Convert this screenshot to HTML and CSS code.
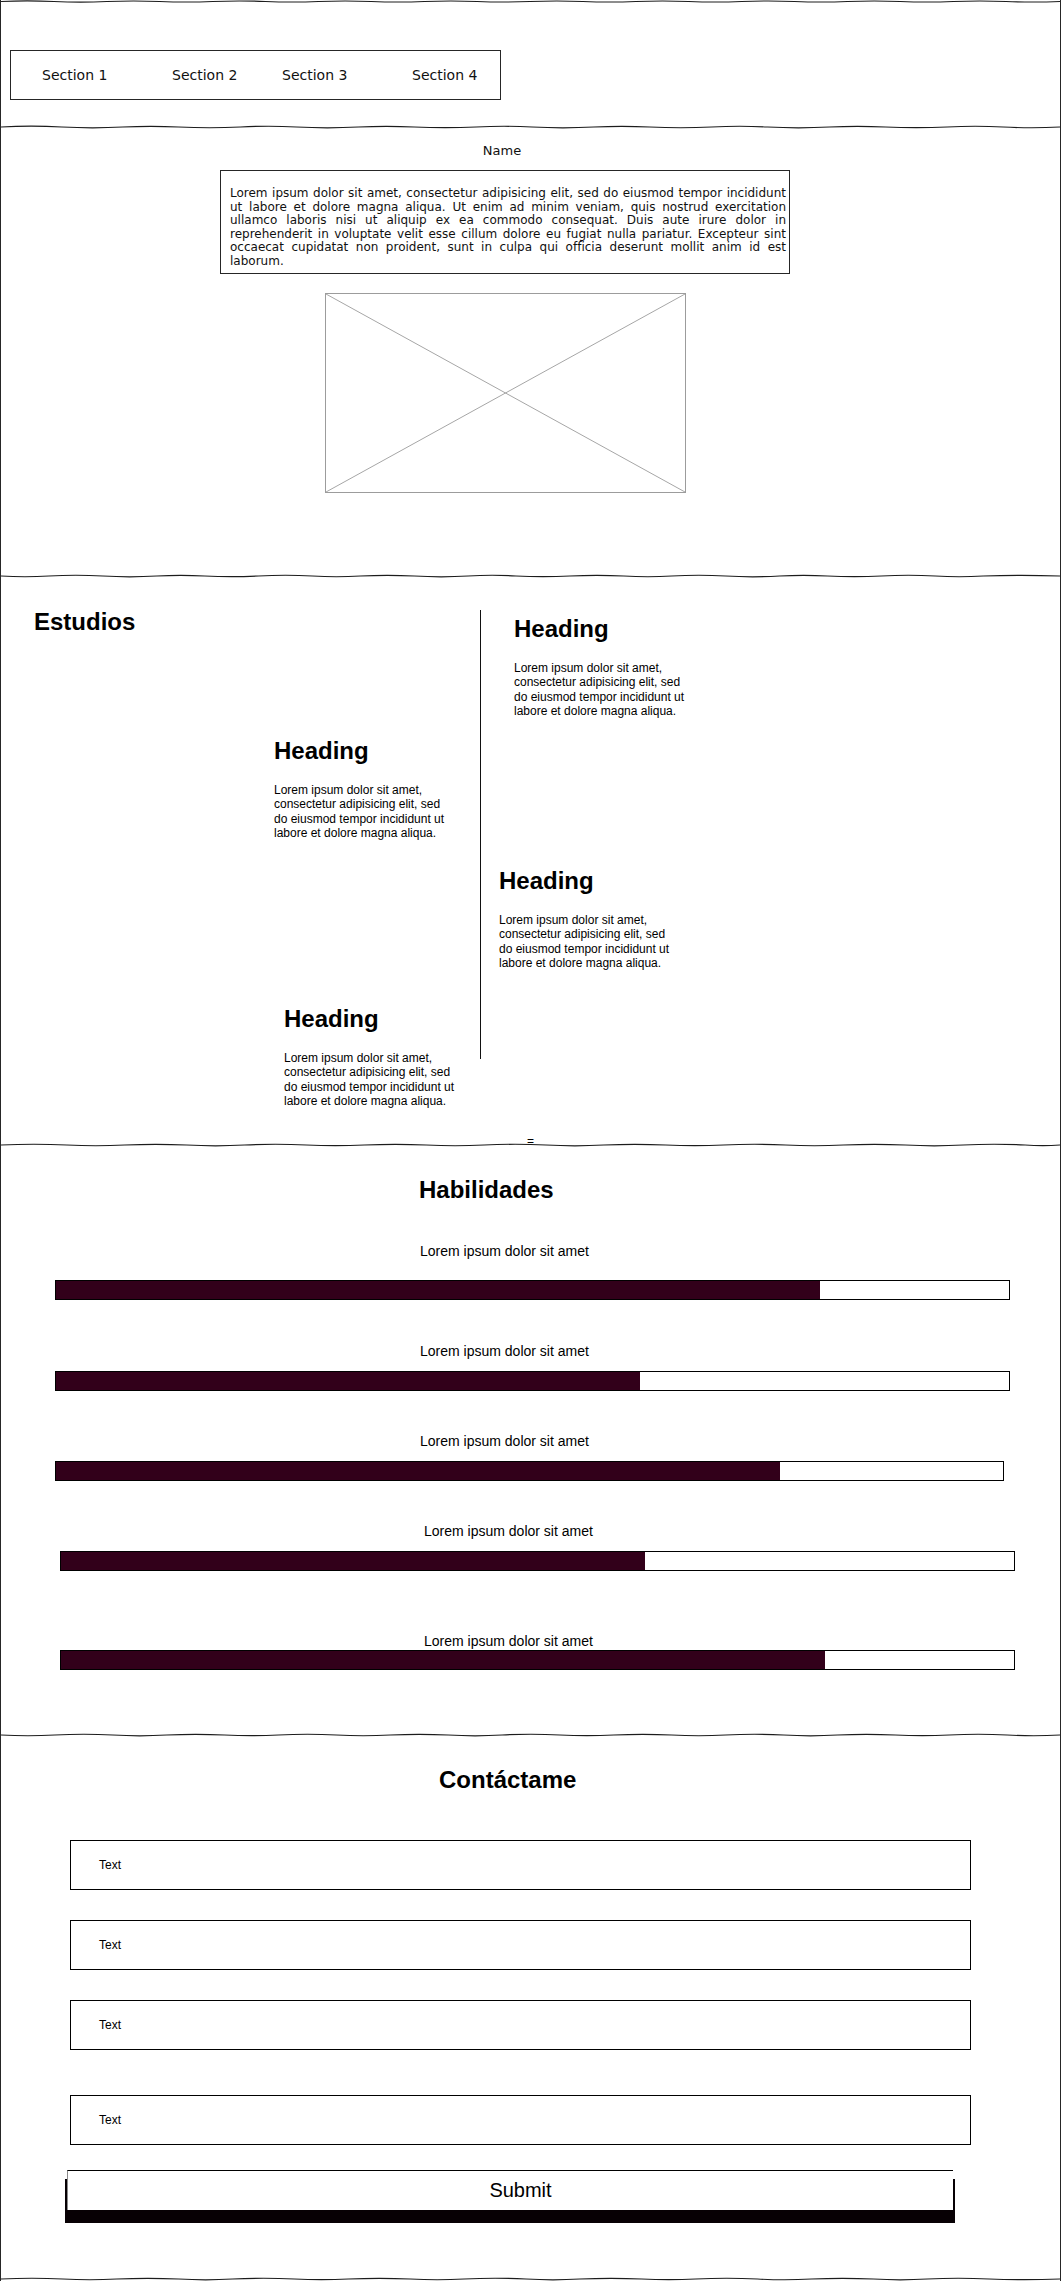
FILE: index.html
```html
<!DOCTYPE html>
<html lang="es">
<head>
<meta charset="utf-8">
<title>Portfolio wireframe</title>
<link rel="stylesheet" href="styles.css">
</head>
<body>
<div class="page">
  <svg class="rule rule--top" viewBox="0 0 1061 4" preserveAspectRatio="none"><path d="M0 2 Q26 0.6 53 2 Q80 3.4 106 2 Q133 0.6 159 2 Q186 3.4 212 2 Q239 0.6 265 2 Q292 3.4 318 2 Q345 0.6 371 2 Q398 3.4 424 2 Q451 0.6 477 2 Q504 3.4 530 2 Q557 0.6 583 2 Q610 3.4 636 2 Q663 0.6 689 2 Q716 3.4 742 2 Q769 0.6 795 2 Q822 3.4 848 2 Q875 0.6 901 2 Q928 3.4 954 2 Q981 0.6 1007 2 Q1034 3.4 1061 2"/></svg>

  <header class="top">
    <nav class="nav">
      <span class="nav-item">Section 1</span>
      <span class="nav-item">Section 2</span>
      <span class="nav-item">Section 3</span>
      <span class="nav-item">Section 4</span>
    </nav>
  </header>

  <svg class="rule" viewBox="0 0 1061 4" preserveAspectRatio="none"><path d="M0 2 Q30 0.4 61 2 Q92 3.6 122 2 Q150 0.6 178 2 Q209 3.5 240 2 Q268 0.5 296 2 Q327 3.6 358 2 Q386 0.6 414 2 Q445 3.4 476 2 Q504 0.5 532 2 Q563 3.6 594 2 Q622 0.6 650 2 Q681 3.5 712 2 Q740 0.5 768 2 Q799 3.6 830 2 Q858 0.6 886 2 Q917 3.4 948 2 Q976 0.5 1004 2 Q1033 3.5 1061 2"/></svg>

  <section class="hero">
    <div class="hero-col">
      <div class="name">Name</div>
      <p class="intro">Lorem ipsum dolor sit amet, consectetur adipisicing elit, sed do eiusmod tempor incididunt ut labore et dolore magna aliqua. Ut enim ad minim veniam, quis nostrud exercitation ullamco laboris nisi ut aliquip ex ea commodo consequat. Duis aute irure dolor in reprehenderit in voluptate velit esse cillum dolore eu fugiat nulla pariatur. Excepteur sint occaecat cupidatat non proident, sunt in culpa qui officia deserunt mollit anim id est laborum.</p>
      <div class="placeholder">
        <svg class="placeholder-x" viewBox="0 0 359 198" preserveAspectRatio="none"><line x1="0" y1="0" x2="359" y2="198"/><line x1="0" y1="198" x2="359" y2="0"/></svg>
      </div>
    </div>
  </section>

  <svg class="rule" viewBox="0 0 1061 4" preserveAspectRatio="none"><path d="M0 2 Q24 3.5 48 2 Q75 0.5 102 2 Q129 3.6 156 2 Q180 0.6 204 2 Q231 3.4 258 2 Q285 0.5 312 2 Q336 3.5 360 2 Q387 0.6 414 2 Q441 3.6 468 2 Q492 0.5 516 2 Q543 3.4 570 2 Q597 0.6 624 2 Q648 3.5 672 2 Q699 0.5 726 2 Q753 3.6 780 2 Q804 0.6 828 2 Q855 3.4 882 2 Q909 0.5 936 2 Q960 3.5 984 2 Q1022 0.6 1061 2"/></svg>

  <section class="estudios">
    <div class="timeline">
      <h2 class="title title--estudios">Estudios</h2>
      <div class="tl-line"></div>
      <article class="tl-item tl-item--1">
        <h3 class="tl-heading">Heading</h3>
        <p class="tl-text">Lorem ipsum dolor sit amet, consectetur adipisicing elit, sed do eiusmod tempor incididunt ut labore et dolore magna aliqua.</p>
      </article>
      <article class="tl-item tl-item--2">
        <h3 class="tl-heading">Heading</h3>
        <p class="tl-text">Lorem ipsum dolor sit amet, consectetur adipisicing elit, sed do eiusmod tempor incididunt ut labore et dolore magna aliqua.</p>
      </article>
      <article class="tl-item tl-item--3">
        <h3 class="tl-heading">Heading</h3>
        <p class="tl-text">Lorem ipsum dolor sit amet, consectetur adipisicing elit, sed do eiusmod tempor incididunt ut labore et dolore magna aliqua.</p>
      </article>
      <article class="tl-item tl-item--4">
        <h3 class="tl-heading">Heading</h3>
        <p class="tl-text">Lorem ipsum dolor sit amet, consectetur adipisicing elit, sed do eiusmod tempor incididunt ut labore et dolore magna aliqua.</p>
      </article>
    </div>
    <div class="eq">=</div>
  </section>

  <svg class="rule" viewBox="0 0 1061 4" preserveAspectRatio="none"><path d="M0 2 Q33 0.5 66 2 Q95 3.5 124 2 Q155 0.6 186 2 Q215 3.6 244 2 Q275 0.5 306 2 Q335 3.4 364 2 Q395 0.6 426 2 Q455 3.5 484 2 Q515 0.5 546 2 Q575 3.6 604 2 Q635 0.6 666 2 Q695 3.4 724 2 Q755 0.5 786 2 Q815 3.5 844 2 Q875 0.6 906 2 Q935 3.6 964 2 Q995 0.5 1026 2 Q1044 3.4 1061 2"/></svg>

  <section class="skills">
    <h2 class="title title--skills">Habilidades</h2>
    <div class="skill skill--1">
      <div class="skill-label">Lorem ipsum dolor sit amet</div>
      <div class="bar"><div class="bar-fill" style="width:764px"></div></div>
    </div>
    <div class="skill skill--2">
      <div class="skill-label">Lorem ipsum dolor sit amet</div>
      <div class="bar"><div class="bar-fill" style="width:584px"></div></div>
    </div>
    <div class="skill skill--3">
      <div class="skill-label">Lorem ipsum dolor sit amet</div>
      <div class="bar"><div class="bar-fill" style="width:724px"></div></div>
    </div>
    <div class="skill skill--4">
      <div class="skill-label">Lorem ipsum dolor sit amet</div>
      <div class="bar"><div class="bar-fill" style="width:584px"></div></div>
    </div>
    <div class="skill skill--5">
      <div class="skill-label">Lorem ipsum dolor sit amet</div>
      <div class="bar"><div class="bar-fill" style="width:764px"></div></div>
    </div>
  </section>

  <svg class="rule" viewBox="0 0 1061 4" preserveAspectRatio="none"><path d="M0 2 Q27 3.5 54 2 Q83 0.5 112 2 Q139 3.6 166 2 Q195 0.6 224 2 Q251 3.4 278 2 Q307 0.5 336 2 Q363 3.5 390 2 Q419 0.6 448 2 Q475 3.6 502 2 Q531 0.5 560 2 Q587 3.4 614 2 Q643 0.6 672 2 Q699 3.5 726 2 Q755 0.5 784 2 Q811 3.6 838 2 Q867 0.6 896 2 Q923 3.4 950 2 Q979 0.5 1008 2 Q1035 3.5 1061 2"/></svg>

  <section class="contact">
    <h2 class="title title--contact">Contáctame</h2>
    <form class="form">
      <div class="field field--1">Text</div>
      <div class="field field--2">Text</div>
      <div class="field field--3">Text</div>
      <div class="field field--4">Text</div>
      <div class="submit">Submit</div>
    </form>
  </section>

  <svg class="rule" viewBox="0 0 1061 4" preserveAspectRatio="none"><path d="M0 2 Q31 0.5 62 2 Q89 3.5 116 2 Q147 0.6 178 2 Q205 3.6 232 2 Q263 0.5 294 2 Q321 3.4 348 2 Q379 0.6 410 2 Q437 3.5 464 2 Q495 0.5 526 2 Q553 3.6 580 2 Q611 0.6 642 2 Q669 3.4 696 2 Q727 0.5 758 2 Q785 3.5 812 2 Q843 0.6 874 2 Q901 3.6 928 2 Q959 0.5 990 2 Q1025 3.4 1061 2"/></svg>
</div>
</body>
</html>
```

FILE: styles.css
```css
* {
  box-sizing: border-box;
}

html,
body {
  margin: 0;
  padding: 0;
  background: #ffffff;
}

body {
  font-family: "Liberation Sans", Arial, sans-serif;
  color: #000000;
}

.page {
  width: 1061px;
  height: 2281px;
  border-left: 1px solid #262626;
  border-right: 1px solid #262626;
  overflow: hidden;
}

/* hand-drawn horizontal rules */
.rule {
  display: block;
  width: 100%;
  height: 4px;
  overflow: visible;
}

.rule--top {
  height: 3px;
}

.rule path {
  fill: none;
  stroke: #1c1c1c;
  stroke-width: 1.2;
  vector-effect: non-scaling-stroke;
}

/* header / nav */
.top {
  height: 122px;
  padding-top: 47px;
}

.nav {
  margin-left: 9px;
  width: 491px;
  height: 50px;
  border: 1px solid #262626;
  padding-left: 31px;
  display: grid;
  grid-template-columns: 130px 110px 130px auto;
  align-items: center;
  font-family: "DejaVu Sans", Verdana, sans-serif;
  font-size: 14px;
  color: #111111;
}

/* hero */
.hero {
  height: 445px;
  padding-top: 14px;
}

.hero-col {
  margin-left: 219px;
  width: 570px;
  display: flex;
  flex-direction: column;
  align-items: center;
}

.name {
  font-family: "DejaVu Sans", Verdana, sans-serif;
  font-size: 13px;
  line-height: 16px;
  margin-right: 6px;
  color: #111111;
}

.intro {
  margin: 11px 0 0;
  width: 570px;
  border: 1px solid #262626;
  padding: 16px 3px 4px 9px;
  font-family: "DejaVu Sans", Verdana, sans-serif;
  font-size: 12px;
  line-height: 13.6px;
  text-align: justify;
  color: #111111;
}

.placeholder {
  margin-top: 19px;
  width: 361px;
  height: 200px;
  border: 1px solid #9c9c9c;
}

.placeholder-x {
  display: block;
  width: 100%;
  height: 100%;
}

.placeholder-x line {
  stroke: #a6a6a6;
  stroke-width: 1;
}

/* shared titles */
.title {
  margin: 0;
  font-size: 24px;
  line-height: 28px;
  font-weight: 700;
}

/* estudios / timeline */
.estudios {
  height: 565px;
  padding-top: 30px;
  display: flex;
  flex-direction: column;
}

.timeline {
  display: grid;
  grid-template-columns: 479px 1px 1fr;
  grid-template-rows: 129px 130px 138px auto;
}

.title--estudios {
  grid-column: 1;
  grid-row: 1;
  margin-left: 33px;
  align-self: start;
}

.tl-line {
  grid-column: 2;
  grid-row: 1 / 5;
  align-self: start;
  margin-top: 2px;
  width: 1px;
  height: 449px;
  background: #111111;
}

.tl-item {
  align-self: start;
}

.tl-item--1 {
  grid-column: 3;
  grid-row: 1;
  margin-top: 7px;
  margin-left: 33px;
}

.tl-item--2 {
  grid-column: 1;
  grid-row: 2;
  margin-left: 273px;
}

.tl-item--3 {
  grid-column: 3;
  grid-row: 3;
  margin-left: 18px;
}

.tl-item--4 {
  grid-column: 1;
  grid-row: 4;
  margin-left: 283px;
}

.tl-heading {
  margin: 0;
  font-size: 24px;
  line-height: 28px;
  font-weight: 700;
}

.tl-text {
  margin: 17.5px 0 0;
  width: 175px;
  font-size: 12px;
  line-height: 14.6px;
}

.eq {
  margin-top: auto;
  height: 4px;
  line-height: 4px;
  font-size: 12px;
  text-align: center;
}

/* skills */
.skills {
  height: 586px;
  padding-top: 29px;
}

.title--skills {
  margin-left: 418px;
}

.skill-label {
  font-size: 14px;
  line-height: 16px;
  margin-left: 419px;
}

.bar {
  margin-left: 54px;
  width: 955px;
  height: 20px;
  border: 1px solid #000000;
  background: #ffffff;
}

.bar-fill {
  height: 100%;
  background: #32001a;
}

.skill--1 {
  margin-top: 39px;
}

.skill--1 .bar {
  margin-top: 21px;
}

.skill--2,
.skill--3 {
  margin-top: 42px;
}

.skill--2 {
  margin-top: 43px;
}

.skill--2 .bar,
.skill--3 .bar,
.skill--4 .bar {
  margin-top: 12px;
}

.skill--3 .bar {
  width: 949px;
}

.skill--4 {
  margin-top: 42px;
}

.skill--5 {
  margin-top: 62px;
}

.skill--5 .bar {
  margin-top: 1px;
}

.skill--4 .skill-label,
.skill--5 .skill-label {
  margin-left: 423px;
}

.skill--4 .bar,
.skill--5 .bar {
  margin-left: 59px;
}

/* contact */
.contact {
  height: 540px;
  padding-top: 29px;
}

.title--contact {
  margin-left: 438px;
}

.form {
  margin: 0;
  display: flex;
  flex-direction: column;
  align-items: flex-start;
}

.field {
  margin-left: 69px;
  width: 901px;
  height: 50px;
  border: 1px solid #000000;
  padding-left: 28px;
  display: flex;
  align-items: center;
  font-size: 12px;
}

.field--1 {
  margin-top: 46px;
}

.field--2,
.field--3 {
  margin-top: 30px;
}

.field--4 {
  margin-top: 45px;
}

.submit {
  margin-top: 25px;
  margin-left: 66px;
  width: 886px;
  height: 40px;
  border-top: 1px solid #000000;
  border-left: 1px solid #8a8a8a;
  padding-left: 20px;
  background: #ffffff;
  box-shadow: 0 11px 0 2px #070004;
  font-size: 20px;
  line-height: 39px;
  text-align: center;
}
```
